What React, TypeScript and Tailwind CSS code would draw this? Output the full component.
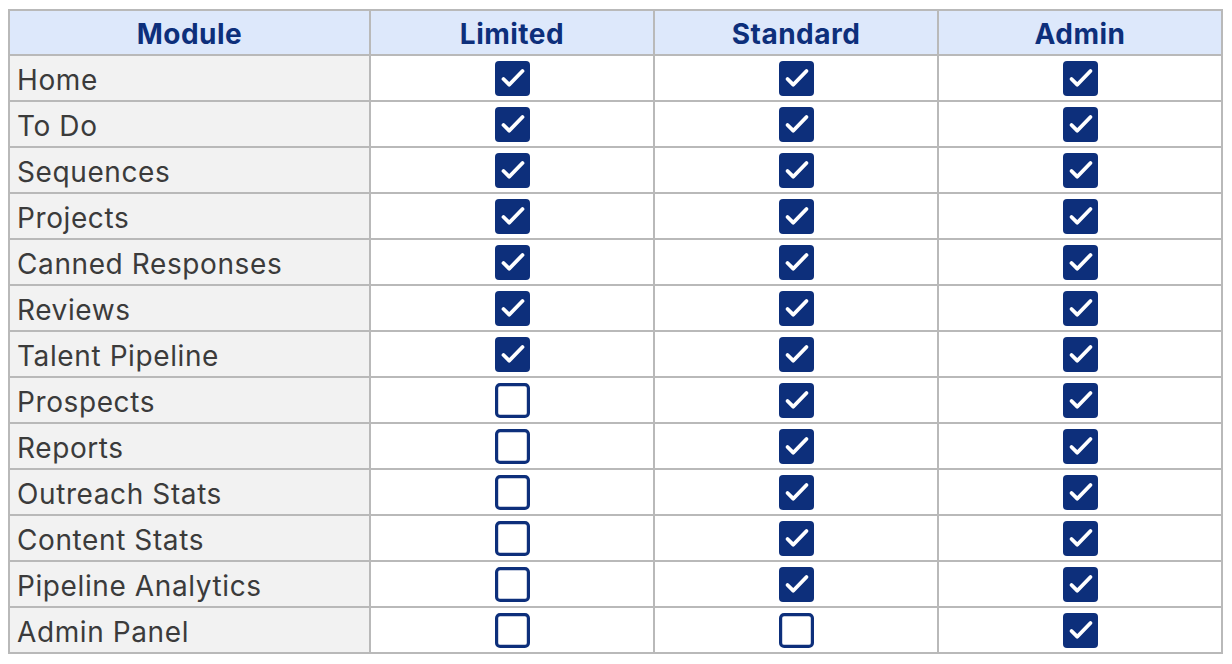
import React from "react";

const rows: [string, boolean, boolean, boolean][] = [
  ["Home", true, true, true],
  ["To Do", true, true, true],
  ["Sequences", true, true, true],
  ["Projects", true, true, true],
  ["Canned Responses", true, true, true],
  ["Reviews", true, true, true],
  ["Talent Pipeline", true, true, true],
  ["Prospects", false, true, true],
  ["Reports", false, true, true],
  ["Outreach Stats", false, true, true],
  ["Content Stats", false, true, true],
  ["Pipeline Analytics", false, true, true],
  ["Admin Panel", false, false, true],
];

function Box({ checked }: { checked: boolean }) {
  if (checked) {
    return (
      <svg width="35" height="35" viewBox="0 0 35 35">
        <rect x="0" y="0" width="35" height="35" rx="4" fill="#0d2f7b" />
        <path d="M8.5 18 L14.2 23.7 L27.5 10" fill="none" stroke="#ffffff" strokeWidth="3.8" strokeLinecap="round" strokeLinejoin="round" />
      </svg>
    );
  }
  return (
    <svg width="35" height="35" viewBox="0 0 35 35">
      <rect x="1.6" y="1.6" width="31.8" height="31.8" rx="3.5" fill="#ffffff" stroke="#0d2f7b" strokeWidth="3.2" />
    </svg>
  );
}

export default function App() {
  return (
    <div className="w-[1232px] h-[664px] bg-white pt-[9px] pl-[8px]" style={{ fontFamily: "Inter, 'Noto Sans', sans-serif" }}>
      <div className="grid w-fit grid-cols-[359px_282px_282px_282px] gap-[2px] bg-[#b9b9b9] p-[2px]">
        {["Module", "Limited", "Standard", "Admin"].map((h) => (
          <div key={h} className="h-[43px] bg-[#dde8fb] flex items-center justify-center text-[28px] tracking-[0.5px] font-bold text-[#0d2f7b] pt-[3px]">
            {h}
          </div>
        ))}
        {rows.map(([name, a, b, c]) => (
          <React.Fragment key={name}>
            <div className="h-[44px] bg-[#f2f2f2] flex items-center pl-[7px] text-[28px] tracking-[0.6px] text-[#3b3b3b] pt-[4px]">
              {name}
            </div>
            {[a, b, c].map((v, i) => (
              <div key={i} className="h-[44px] bg-white flex items-center justify-center">
                <Box checked={v} />
              </div>
            ))}
          </React.Fragment>
        ))}
      </div>
    </div>
  );
}
